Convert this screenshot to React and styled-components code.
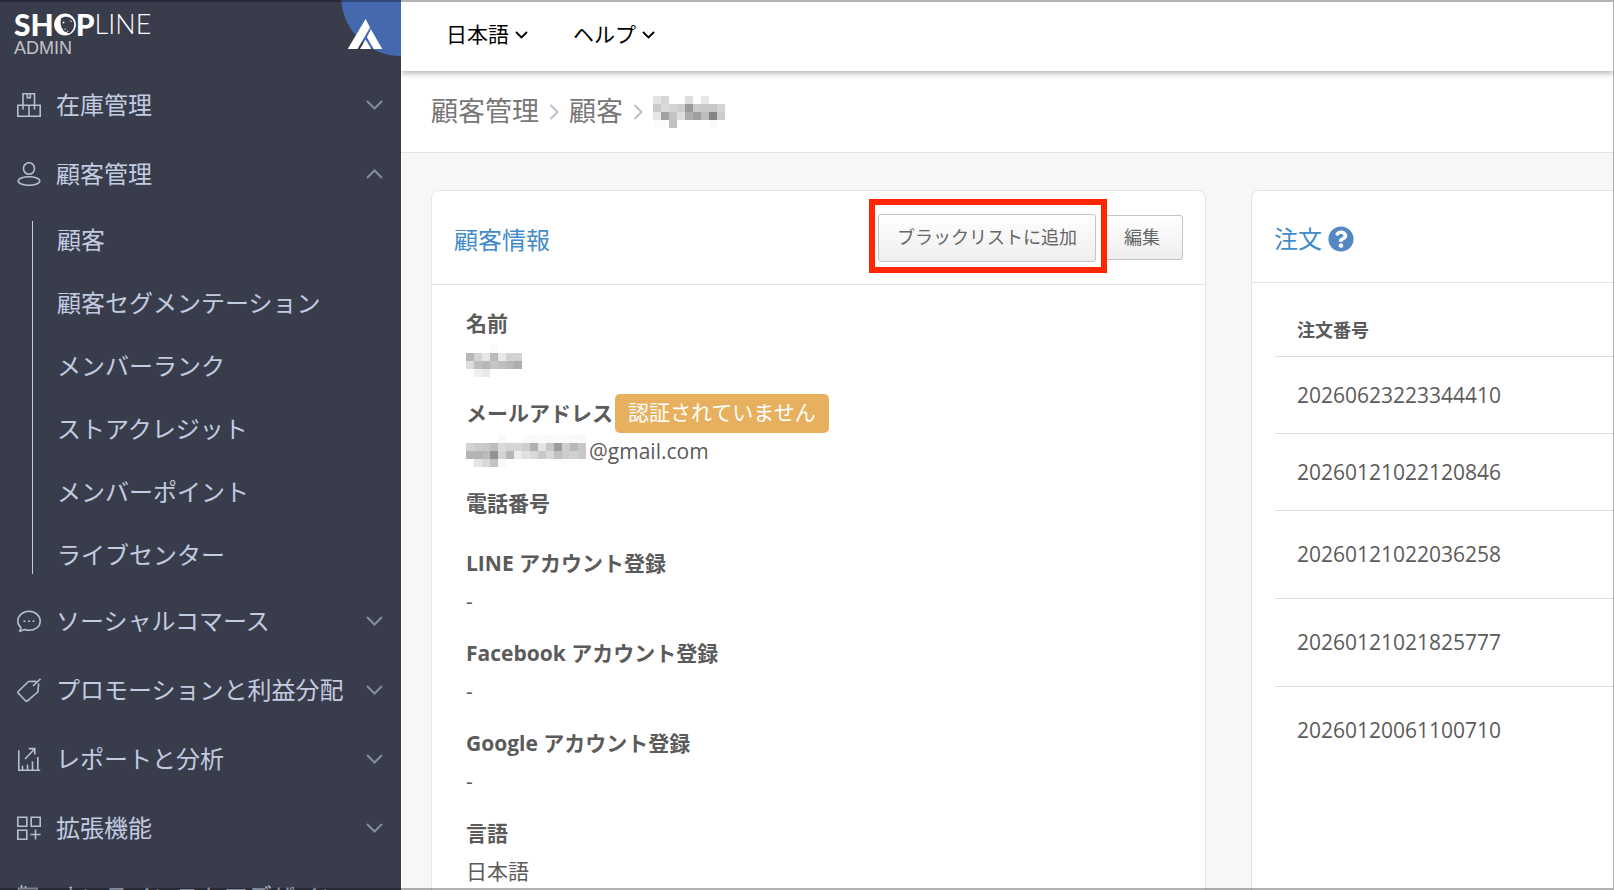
import React from "react";
import styled, { createGlobalStyle } from "styled-components";
import { FaQuestionCircle } from "react-icons/fa";

const GlobalStyle = createGlobalStyle`
  *, *::before, *::after { box-sizing: border-box; }
  html, body { margin: 0; padding: 0; }
  body {
    background: #f7f7f7;
    color: #5b5b5b;
    font-family: "Open Sans", "Noto Sans CJK JP", sans-serif;
    font-size: 21px;
  }
  button { font-family: inherit; cursor: pointer; }
  a { color: inherit; text-decoration: none; }
`;

const Frame = styled.div`
  position: fixed;
  inset: 0;
  border: solid rgba(0, 0, 0, 0.3);
  border-width: 2px 1px 2px 0;
  pointer-events: none;
  z-index: 10;
`;

const Shell = styled.div`
  display: flex;
  height: 100vh;
  overflow: hidden;
`;

/* Sidebar */

const Sidebar = styled.aside`
  flex: none;
  width: 401px;
  overflow: hidden;
  background: #393d4b;
  color: #c3cbe1;
`;

const Brand = styled.header`
  display: flex;
  justify-content: space-between;
  height: 70px;
  padding-left: 14px;
`;

const BrandName = styled.div`
  padding-top: 9px;
  color: #fff;
`;

const Wordmark = styled.div`
  display: flex;
  align-items: center;
  height: 30px;
  font: 900 30px/30px Lato, sans-serif;
`;

const WordmarkLight = styled.span`
  font-size: 27px;
  font-weight: 300;
`;

const BrandRole = styled.div`
  color: #c2c3c6;
  font: 18px/18px "Liberation Sans", sans-serif;
`;

const Nav = styled.nav`
  display: flex;
  flex-direction: column;
`;

const NavButton = styled.button`
  display: flex;
  align-items: center;
  gap: 15px;
  flex: none;
  width: 100%;
  height: 69px;
  padding: 0 18px 0 17px;
  border: 0;
  background: none;
  color: inherit;
  font-size: 24px;
  text-align: left;

  svg { flex: none; }
`;

const NavLabel = styled.span`
  flex: 1;
  padding-bottom: 2px;
  white-space: nowrap;
`;

const SubMenu = styled.ul`
  position: relative;
  margin: 0;
  padding: 0;
  list-style: none;

  &::before {
    content: "";
    position: absolute;
    left: 32px;
    top: 13px;
    bottom: 12px;
    width: 1px;
    background: #c3cbe1;
  }
`;

const SubLink = styled.a`
  display: block;
  padding-left: 57px;
  font-size: 24px;
  line-height: 63px;
`;

/* Main column */

const Main = styled.div`
  flex: 1;
  min-width: 0;
  overflow: hidden;
`;

const TopBar = styled.header`
  position: relative;
  display: flex;
  align-items: center;
  gap: 45px;
  height: 71px;
  padding: 0 45px 2px;
  background: #fff;
  box-shadow: 0 2px 6px rgba(0, 0, 0, 0.32);
`;

const TopButton = styled.button`
  display: flex;
  align-items: center;
  gap: 6px;
  padding: 0;
  border: 0;
  background: none;
  color: #000;
  font-size: 21px;
`;

const RaisedText = styled.span`
  padding-bottom: 4px;
`;

const Breadcrumb = styled.nav`
  display: flex;
  align-items: center;
  gap: 10px;
  height: 82px;
  padding: 0 30px;
  border-bottom: 1px solid #e4e4e4;
  background: #fff;
  color: #777;
  font-size: 27px;
`;

const CrumbLink = styled.a`
  padding-bottom: 4px;
`;

const Cards = styled.main`
  display: grid;
  grid-template-columns: minmax(0, 775fr) minmax(0, 363fr);
  gap: 45px;
  padding: 37px 0 0 30px;
`;

const Card = styled.section`
  border: 1px solid #e4e4e4;
  border-radius: 8px;
  background: #fff;
  ${(p) => p.$bleed && "border-right: 0; border-radius: 8px 0 0 0;"}
`;

const CardHeader = styled.div`
  display: flex;
  align-items: center;
  justify-content: space-between;
  height: ${(p) => p.$height}px;
  padding: 0 22px;
  border-bottom: 1px solid #e4e4e4;
`;

const CardTitle = styled.h2`
  display: flex;
  align-items: center;
  gap: 6px;
  margin: 0;
  padding-top: 1px;
  color: #428bca;
  font-size: 24px;
  font-weight: 400;
`;

const HelpIcon = styled(FaQuestionCircle)`
  width: 26px;
  height: 26px;
  margin-top: 4px;
  color: #5488c3;
`;

const Actions = styled.div`
  display: flex;
  align-items: center;
  gap: 5px;
`;

const Highlight = styled.div`
  position: relative;

  &::after {
    content: "";
    position: absolute;
    inset: -15px -11px -11px -9px;
    border: 6px solid #ff2600;
    pointer-events: none;
  }
`;

const Button = styled.button`
  display: block;
  height: ${(p) => (p.$large ? 48 : 45)}px;
  padding: 0 ${(p) => (p.$large ? 18 : 22)}px 4px;
  border: 1px solid #c4c4c4;
  border-radius: 3px;
  background: linear-gradient(#fff, #eee);
  color: #666;
  font-size: 18px;
  white-space: nowrap;
`;

const Details = styled.dl`
  margin: 0;
  padding: 23px 34px;
`;

const Field = styled.div`
  display: flex;
  flex-direction: column;
  gap: 8px;
  margin-bottom: 22px;
  line-height: 30px;
`;

const Term = styled.dt`
  display: flex;
  align-items: center;
  height: 30px;
  font-weight: 700;
`;

const Value = styled.dd`
  display: flex;
  align-items: center;
  gap: 3px;
  height: ${(p) => (p.$empty ? 0 : 30)}px;
  margin: 0;
`;

const Badge = styled.span`
  flex: none;
  height: 39px;
  margin-left: 2px;
  padding: 0 13px;
  border-radius: 5px;
  background: #e6b05f;
  color: #fff;
  font-weight: 400;
  line-height: 36px;
`;

const TableWrap = styled.div`
  padding: 22px 0 0 23px;
`;

const Table = styled.table`
  width: 100%;
  border-collapse: collapse;
  text-align: left;

  th {
    height: 51px;
    padding: 0 22px 2px;
    font-size: 18px;
  }
`;

const OrderCell = styled.td`
  height: ${(p) => (p.$tall ? 88 : 77)}px;
  padding: 0 22px;
  border-top: 1px solid #ddd;
`;

/* Drawings */

const Chevron = ({ up }) => (
  <svg width="17" height="10" viewBox="0 0 17 10" fill="none" stroke="#858ca3" strokeWidth="2" aria-hidden="true">
    <path d={up ? "M1 9 8.500 1.500 16 9" : "M1 1 8.500 8.500 16 1"} />
  </svg>
);

const SmallChevron = () => (
  <svg width="13" height="8" viewBox="0 0 13 8" fill="none" stroke="#000" strokeWidth="1.800" aria-hidden="true">
    <path d="M1 1 6.500 6.500 12 1" />
  </svg>
);

const CrumbChevron = () => (
  <svg width="10" height="16" viewBox="0 0 10 16" fill="none" stroke="#b6bcc9" strokeWidth="1.800" aria-hidden="true">
    <path d="M1.500 1 8.500 8 1.500 15" />
  </svg>
);

const icons = {
  stock: (
    <path d="M.8 12.200h22.400v11H.8zM12 12.200v11M6 12.200V.8h11.500v11.400M10.300 1v3.800h3V1M6 12.500v4M17.500 12.500v4" />
  ),
  customer: (
    <>
      <ellipse cx="12" cy="6.500" rx="5.500" ry="5.800" />
      <ellipse cx="12" cy="19" rx="10.800" ry="4.300" />
    </>
  ),
  social: (
    <>
      <path d="M2.800 22.300 4 18.800C2 17 .8 14.700.8 12.200.8 6.600 5.800 2.300 12 2.300s11.200 4.300 11.200 9.900S18.200 21.300 12 21.300c-1.500 0-3-.3-4.300-.8z" strokeLinejoin="round" />
      <path d="M6.500 12.300h2M11 12.300h2M15.500 12.300h2" />
    </>
  ),
  promotion: (
    <path d="M19.500 4 18 3.200 11.500 3.500 1.500 13.200q-1 1-.2 2l7.200 7.500q1 1 2.200 0L20.800 14l.9-8.500M16 8 23.500.8" strokeLinejoin="round" />
  ),
  report: (
    <path d="M1.800 3.300v19.900h21.400M5.500 22.500v-3.800M10.500 22.500v-5M15.500 22.500v-8M20.800 22.500V10M8 12 17.300 2.300M11.800 1.600h6v6" />
  ),
  extension: (
    <path d="M.8 1.300h9v9h-9zM14.200 1.300h9v9h-9zM.8 14.200h9v9h-9zM18.500 13.500v10M13.500 18.500h10" />
  ),
  design: (
    <path d="M1.500 23V3.600h18.500V23zM4.500 0v3.600M8.500 1v2.600" />
  ),
};

const NavIcon = ({ name }) => (
  <svg width="24" height="24" viewBox="0 0 24 24" fill="none" stroke="#b7bed1" strokeWidth="1.600" aria-hidden="true">
    {icons[name]}
  </svg>
);

const Whale = () => (
  <svg width="22" height="23" viewBox="0 0 22 23" aria-hidden="true">
    <circle cx="11" cy="11.500" r="10.900" fill="#fff" />
    <path d="M7 5.500C10 2.500 17 3 19.500 8c1.600 4.500.5 9-4 12.200-2 .4-3.500 0-4.500-.7-3-2.500-4.500-7-4.500-10.500z" fill="#393d4b" />
    <path d="M6 14l2.500 1.800 1 2.700 3 .5 1.500 1.500-2 1.200-4-1.500z" fill="#fff" />
    <path d="M10.500 16.200h1.200M13 18.200h1.200M16.500 7.500l1 1.500" stroke="#fff" />
    <circle cx="9.500" cy="9.500" r="1" fill="#fff" />
  </svg>
);

const Corner = () => (
  <svg width="60" height="56" viewBox="0 0 60 56" aria-hidden="true">
    <circle cx="60" cy="-4" r="60" fill="#4469af" />
    <g fill="#fff">
      <path d="M24.600 19 29 27.500 16.500 49H6.700z" />
      <path d="M29.900 29.300 41.300 49h-8.600L25.900 37.300z" />
      <path d="M24.600 39.500 30.300 49H19z" />
    </g>
  </svg>
);

const Mosaic = ({ rows }) => (
  <svg width={rows[0].length * 8} height={rows.length * 8} shapeRendering="crispEdges" aria-hidden="true">
    {rows.flatMap((row, y) =>
      row.map((v, x) => (
        <rect key={x + "-" + y} x={x * 8} y={y * 8} width="8" height="8" fill={"rgb(" + v + "," + v + "," + v + ")"} />
      ))
    )}
  </svg>
);

const crumbMosaic = [
  [228, 214, 255, 255, 222, 255, 232, 255, 255],
  [202, 218, 212, 204, 154, 202, 200, 200, 212],
  [230, 162, 196, 222, 172, 160, 188, 132, 204],
  [251, 252, 194, 255, 255, 255, 255, 250, 255],
];
const nameMosaic = [
  [255, 255, 255, 251, 255, 255, 255],
  [182, 212, 230, 186, 232, 210, 210],
  [220, 190, 182, 196, 190, 184, 174],
  [255, 240, 232, 255, 255, 255, 255],
];
const mailMosaic = [
  [255, 255, 255, 255, 248, 255, 255, 251, 248, 251, 248, 251, 251, 248, 248],
  [210, 204, 200, 188, 218, 212, 214, 206, 176, 228, 198, 156, 206, 184, 200],
  [180, 180, 186, 146, 212, 182, 236, 224, 216, 200, 216, 192, 204, 208, 200],
  [255, 228, 216, 194, 248, 255, 255, 255, 255, 255, 255, 255, 255, 255, 255],
];

/* Data */

const menu = [
  { icon: "stock", label: "在庫管理" },
  {
    icon: "customer",
    label: "顧客管理",
    children: [
      "顧客",
      "顧客セグメンテーション",
      "メンバーランク",
      "ストアクレジット",
      "メンバーポイント",
      "ライブセンター",
    ],
  },
  { icon: "social", label: "ソーシャルコマース" },
  { icon: "promotion", label: "プロモーションと利益分配" },
  { icon: "report", label: "レポートと分析" },
  { icon: "extension", label: "拡張機能" },
  { icon: "design", label: "オンラインストアデザイン" },
];

const fields = [
  { label: "名前", value: <Mosaic rows={nameMosaic} /> },
  {
    label: "メールアドレス",
    badge: "認証されていません",
    value: (
      <>
        <Mosaic rows={mailMosaic} />
        <span>@gmail.com</span>
      </>
    ),
  },
  { label: "電話番号" },
  { label: "LINE アカウント登録", value: "-" },
  { label: "Facebook アカウント登録", value: "-" },
  { label: "Google アカウント登録", value: "-" },
  { label: "言語", value: "日本語" },
];

const orders = [
  { id: "20260623223344410" },
  { id: "20260121022120846" },
  { id: "20260121022036258", tall: true },
  { id: "20260121021825777", tall: true },
  { id: "20260120061100710", tall: true },
];

export default function App() {
  return (
    <>
      <GlobalStyle />
      <Shell>
        <Sidebar>
          <Brand>
            <BrandName>
              <Wordmark>
                SH
                <Whale />P<WordmarkLight>LINE</WordmarkLight>
              </Wordmark>
              <BrandRole>ADMIN</BrandRole>
            </BrandName>
            <Corner />
          </Brand>
          <Nav>
            {menu.map((item) => (
              <React.Fragment key={item.label}>
                <NavButton type="button" aria-expanded={Boolean(item.children)}>
                  <NavIcon name={item.icon} />
                  <NavLabel>{item.label}</NavLabel>
                  <Chevron up={Boolean(item.children)} />
                </NavButton>
                {item.children && (
                  <SubMenu>
                    {item.children.map((label) => (
                      <li key={label}>
                        <SubLink href="#">{label}</SubLink>
                      </li>
                    ))}
                  </SubMenu>
                )}
              </React.Fragment>
            ))}
          </Nav>
        </Sidebar>
        <Main>
          <TopBar>
            <TopButton type="button">
              <RaisedText>日本語</RaisedText>
              <SmallChevron />
            </TopButton>
            <TopButton type="button">
              <RaisedText>ヘルプ</RaisedText>
              <SmallChevron />
            </TopButton>
          </TopBar>
          <Breadcrumb>
            <CrumbLink href="#">顧客管理</CrumbLink>
            <CrumbChevron />
            <CrumbLink href="#">顧客</CrumbLink>
            <CrumbChevron />
            <Mosaic rows={crumbMosaic} />
          </Breadcrumb>
          <Cards>
            <Card>
              <CardHeader $height={94}>
                <CardTitle>顧客情報</CardTitle>
                <Actions>
                  <Highlight>
                    <Button type="button" $large>
                      ブラックリストに追加
                    </Button>
                  </Highlight>
                  <Button type="button">編集</Button>
                </Actions>
              </CardHeader>
              <Details>
                {fields.map((field) => (
                  <Field key={field.label}>
                    <Term>
                      {field.label}
                      {field.badge && <Badge>{field.badge}</Badge>}
                    </Term>
                    <Value $empty={!field.value}>{field.value}</Value>
                  </Field>
                ))}
              </Details>
            </Card>
            <Card $bleed>
              <CardHeader $height={92}>
                <CardTitle>
                  注文
                  <HelpIcon />
                </CardTitle>
              </CardHeader>
              <TableWrap>
                <Table>
                  <thead>
                    <tr>
                      <th scope="col">注文番号</th>
                    </tr>
                  </thead>
                  <tbody>
                    {orders.map((order) => (
                      <tr key={order.id}>
                        <OrderCell $tall={order.tall}>{order.id}</OrderCell>
                      </tr>
                    ))}
                  </tbody>
                </Table>
              </TableWrap>
            </Card>
          </Cards>
        </Main>
      </Shell>
      <Frame />
    </>
  );
}
